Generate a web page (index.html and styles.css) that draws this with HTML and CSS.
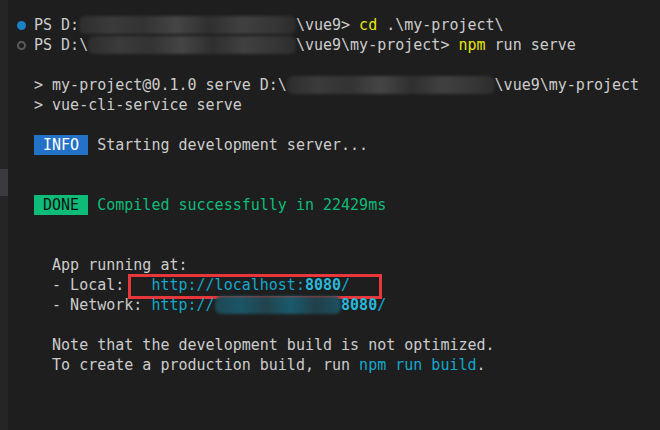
FILE: index.html
```html
<!DOCTYPE html>
<html>
<head>
  <title>Terminal</title>
  <link rel="stylesheet" href="styles.css">
</head>
<body>
  <div class="side">
    <div class="side-mark"></div>
  </div>

  <div class="term">
    <div class="line"><span class="gutter"><span class="dot ok"></span></span><span class="txt">PS D:<span class="blur" style="width: 24ch"></span>\vue9&gt; <span class="cmd">cd</span> .\my-project\</span></div>
    <div class="line"><span class="gutter"><span class="dot idle"></span></span><span class="txt">PS D:\<span class="blur" style="width: 23ch"></span>\vue9\my-project&gt; <span class="cmd">npm</span> run serve</span></div>
    <div class="line"></div>
    <div class="line"><span class="gutter"></span><span class="txt">&gt; my-project@0.1.0 serve D:\<span class="blur" style="width: 23ch"></span>\vue9\my-project</span></div>
    <div class="line"><span class="gutter"></span><span class="txt">&gt; vue-cli-service serve</span></div>
    <div class="line"></div>
    <div class="line"><span class="gutter"></span><span class="txt"><span class="badge info"> INFO </span> Starting development server...</span></div>
    <div class="line"></div>
    <div class="line"></div>
    <div class="line"><span class="gutter"></span><span class="txt"><span class="badge done"> DONE </span> <span class="green">Compiled successfully in 22429ms</span></span></div>
    <div class="line"></div>
    <div class="line"></div>
    <div class="line"><span class="gutter"></span><span class="txt">  App running at:</span></div>
    <div class="line"><span class="gutter"></span><span class="txt">  - Local:   <span class="url">http://localhost:<b>8080</b>/</span></span><span class="mark"></span></div>
    <div class="line"><span class="gutter"></span><span class="txt">  - Network: <span class="url">http://<span class="blur teal" style="width: 14ch"></span><b>8080</b>/</span></span></div>
    <div class="line"></div>
    <div class="line"><span class="gutter"></span><span class="txt">  Note that the development build is not optimized.</span></div>
    <div class="line"><span class="gutter"></span><span class="txt">  To create a production build, run <span class="url">npm run build</span>.</span></div>
  </div>
</body>
</html>
```

FILE: styles.css
```css
body {
  margin: 0;
  padding: 0;
  height: 430px;
  display: flex;
  background: #1e1e1e;
  color: #cccccc;
  font-family: "DejaVu Sans Mono", "Liberation Mono", monospace;
  font-size: 15px;
  overflow: hidden;
}

/* left edge strip */
.side {
  width: 8px;
  background: #252526;
  flex-shrink: 0;
}
.side-mark {
  margin-top: 169px;
  height: 27px;
  background: #3a3a40;
}

.term {
  flex: 1;
  padding-top: 15px;
}

.line {
  position: relative;
  display: flex;
  height: 20px;
  line-height: 20px;
}

.gutter {
  width: 26px;
  flex-shrink: 0;
  display: flex;
  align-items: center;
}

.txt {
  white-space: pre;
}

.dot {
  width: 9px;
  height: 9px;
  margin-left: 9px;
  border-radius: 50%;
  box-sizing: border-box;
}
.dot.ok {
  background: #1b81c4;
}
.dot.idle {
  border: 2px solid #5a5a5a;
}

.cmd {
  color: #e5e510;
}

.blur {
  display: inline-block;
  height: 18px;
  vertical-align: -4px;
  background: linear-gradient(90deg, #2d2d2d, #3b3b3b 15%, #333 30%, #454545 45%, #2f2f2f 60%, #404040 75%, #363636 90%, #2c2c2c);
  filter: blur(1.5px);
  border-radius: 6px;
}
.blur.teal {
  background: linear-gradient(90deg, #1f4753, #1a5566 20%, #22434d 40%, #195a6c 60%, #223f48 80%, #1b5161);
}

.badge {
  display: inline-block;
  height: 20px;
}
.badge.info {
  background: #2472c8;
  color: #ffffff;
}
.badge.done {
  background: #0dbc79;
  color: #111111;
}

.green {
  color: #0dbc79;
}

.url {
  color: #11a8cd;
}
.url b {
  color: #29b8db;
}

/* red highlight around the local url */
.mark {
  position: absolute;
  left: 120px;
  top: -1px;
  width: 254px;
  height: 25px;
  box-sizing: border-box;
  border: 3px solid #e8373a;
}
```
